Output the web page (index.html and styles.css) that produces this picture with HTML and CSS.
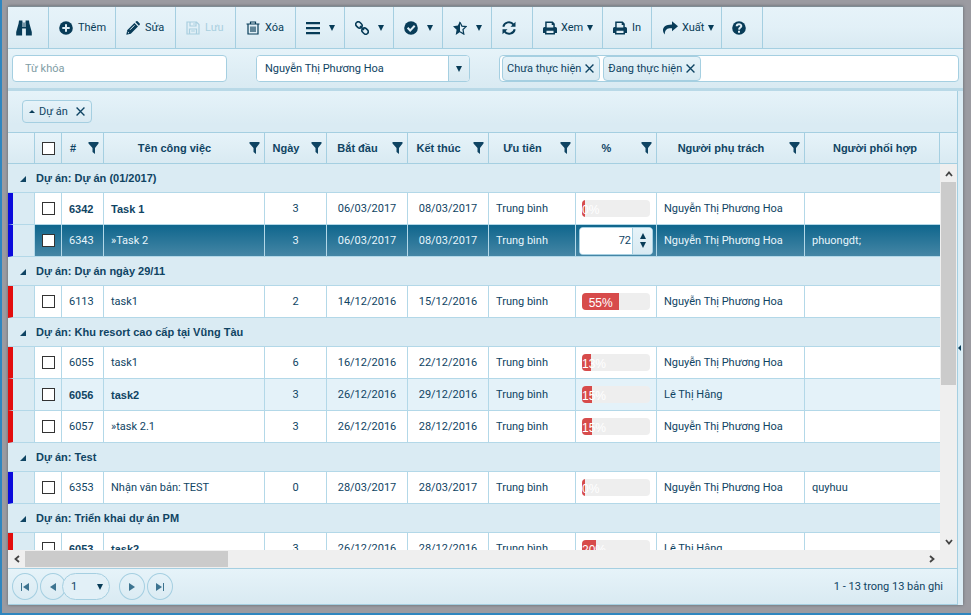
FILE: index.html
```html
<!DOCTYPE html>
<html lang="vi">
<head>
    <meta charset="UTF-8">
    <meta name="viewport" content="width=device-width, initial-scale=1.0">
    <title>Quản lý công việc</title>
    <link rel="stylesheet" href="styles.css">
</head>
<body>
    <div class="window">
        <nav class="toolbar">
            <button class="small" aria-label="Tìm kiếm"><svg class="icon big" viewBox="0 0 16 16"><path d="M3 0.5h3.4v2.2h3.200V0.500H13l0.400 3 2.400 8.500v3.500H9.900V8.500H6.100v7H0.200V12L2.600 3.500z"/><path class="cut" d="M7 3v4M9 3v4"/></svg></button>
            <button class="add"><svg class="icon" viewBox="0 0 14 14"><circle cx="7" cy="7" r="6.800"/><path class="cut thick" d="M7 3.300v7.400M3.300 7h7.400"/></svg>Thêm</button>
            <button class="text"><svg class="icon" viewBox="0 0 14 14"><path d="M1.200 9.200 8.400 2l3.600 3.600-7.200 7.200L0.300 13.700zM9.300 1.100l1-.9q.7-.4 1.300.1l2.100 2.100q.5.700 0 1.300l-.8 1z"/><path class="cut" d="M4 8.800l4.500-4.500M1.800 11l1.200 1.200"/></svg>Sửa</button>
            <button class="text" disabled><svg class="icon line" viewBox="0 0 14 14"><path d="M1 1h9.500L13 3.500V13H1zM4 1v4h6V1M3.500 13V8h7v5M8 2.300v1.500M5.200 10h3.600"/></svg>Lưu</button>
            <button class="text"><svg class="icon line" viewBox="0 0 14 14"><path d="M0.500 3h13M4.500 3V1h5v2M2 3v10h10V3M5 5.500V11M7 5.500V11M9 5.500V11"/></svg>Xóa</button>
            <button class="menu" aria-label="Danh sách"><svg class="icon" viewBox="0 0 14 14"><path d="M0 1h14v2.300H0zM0 6h14v2.300H0zM0 11h14v2.300H0z"/></svg><span class="caret"></span></button>
            <button class="menu" aria-label="Liên kết"><svg class="icon line heavy" viewBox="0 0 14 14"><rect x="0.500" y="1.500" width="6.800" height="5" rx="2.500" transform="rotate(45 4 4)"/><rect x="6.700" y="7.500" width="6.800" height="5" rx="2.500" transform="rotate(45 10 10)"/><path d="M5 5l4 4"/></svg><span class="caret"></span></button>
            <button class="menu" aria-label="Hoàn thành"><svg class="icon" viewBox="0 0 14 14"><circle cx="7" cy="7" r="6.800"/><path class="cut thick" d="M3.600 6.800l2.600 2.700 4.500-4.700"/></svg><span class="caret"></span></button>
            <button class="menu" aria-label="Đánh giá"><svg class="icon" viewBox="0 0 14 14"><path d="M7 0v11l-4.300 3 .9-5.300L0 5.200l4.900-.7z"/><path class="stroke" d="M7 1.200l1.900 3.900 4.100.5-3 2.900.8 4.600L7 10.700"/></svg><span class="caret"></span></button>
            <button class="small" aria-label="Tải lại"><svg class="icon" viewBox="0 0 14 14"><path class="stroke heavy" d="M1.300 5.800A5.700 5.700 0 0 1 11.500 3.600M12.700 8.200A5.700 5.700 0 0 1 2.500 10.400"/><path d="M13.500 0.700v5H8.500zM0.500 13.300v-5h5z"/></svg></button>
            <button class="wide"><svg class="icon" viewBox="0 0 14 14"><path d="M2.200 0.500h7.500l2.100 2.200V6h.7q1.500 0 1.500 1.600V12h-2v1.500H2V12H0V7.600Q0 6 1.500 6h.7z"/><path class="hole" d="M3.700 2h5v2h1.600v2.500H3.700zM3.500 9.800h7V12h-7z"/></svg>Xem<span class="caret"></span></button>
            <button class="menu"><svg class="icon" viewBox="0 0 14 14"><path d="M2.200 0.500h7.500l2.100 2.200V6h.7q1.500 0 1.500 1.600V12h-2v1.500H2V12H0V7.600Q0 6 1.500 6h.7z"/><path class="hole" d="M3.700 2h5v2h1.600v2.500H3.700zM3.500 9.800h7V12h-7z"/></svg>In</button>
            <button class="wide"><svg class="icon big" viewBox="0 0 16 14"><path d="M10 0.300l6 5-6 5V7.200C6 7 3 7.500 2.700 13.500 0 10.500-.8 3.500 10 3.400z"/></svg>Xuất<span class="caret"></span></button>
            <button class="small" aria-label="Trợ giúp"><svg class="icon" viewBox="0 0 14 14"><circle cx="7" cy="7" r="6.800"/><path class="cut thick" d="M4.700 5.200C4.700 2.600 9.400 2.600 9.300 5.100 9.200 6.600 7.200 6.600 7 8.600M7 9.800v1.900"/></svg></button>
        </nav>

        <div class="filters">
            <input type="text" placeholder="Từ khóa" aria-label="Từ khóa">
            <div class="combo">
                <select aria-label="Người phụ trách">
                    <option>Nguyễn Thị Phương Hoa</option>
                    <option>Lê Thị Hằng</option>
                </select>
                <span class="combo-arrow"><span class="caret"></span></span>
            </div>
            <div class="tags">
                <button class="tag">Chưa thực hiện<svg class="cross" viewBox="0 0 8 8"><path d="M0.500 0.500l7 7M7.500 0.500l-7 7"/></svg></button>
                <button class="tag">Đang thực hiện<svg class="cross" viewBox="0 0 8 8"><path d="M0.500 0.500l7 7M7.500 0.500l-7 7"/></svg></button>
                <input type="text" aria-label="Trạng thái">
            </div>
        </div>

        <div class="main">
            <section class="content">
                <div class="grouping">
                    <button class="group-chip"><span class="up"></span>Dự án<svg class="cross" viewBox="0 0 8 8"><path d="M0.500 0.500l7 7M7.500 0.500l-7 7"/></svg></button>
                </div>

                <table class="grid head">
                    <colgroup><col class="c-mark"><col class="c-check"><col class="c-id"><col class="c-name"><col class="c-days"><col class="c-date"><col class="c-date"><col class="c-prio"><col class="c-pct"><col class="c-owner"><col><col class="c-scroll"></colgroup>
                    <thead><tr id="headRow"></tr></thead>
                </table>

                <div class="body-area">
                    <div class="rows">
                        <table class="grid">
                            <colgroup><col class="c-mark"><col class="c-check"><col class="c-id"><col class="c-name"><col class="c-days"><col class="c-date"><col class="c-date"><col class="c-prio"><col class="c-pct"><col class="c-owner"><col></colgroup>
                            <tbody id="taskRows"></tbody>
                        </table>
                    </div>
                    <div class="scroll-y">
                        <svg viewBox="0 0 8 6"><path d="M1 5l3-3.500L7 5"/></svg>
                        <div class="thumb"></div>
                        <svg viewBox="0 0 8 6"><path d="M1 1l3 3.500L7 1"/></svg>
                    </div>
                </div>
                <div class="scroll-x">
                    <svg viewBox="0 0 6 8"><path d="M5 1L1.500 4 5 7"/></svg>
                    <div class="thumb"></div>
                    <svg viewBox="0 0 6 8"><path d="M1 1l3.500 3L1 7"/></svg>
                </div>

                <footer class="pager">
                    <button aria-label="Trang đầu"><svg viewBox="0 0 8 8"><path d="M0 0h1v8H0zM8 0v8L2 4z"/></svg></button>
                    <button aria-label="Trang trước"><svg viewBox="0 0 8 8"><path d="M7 0v8L1 4z"/></svg></button>
                    <div class="page-select">
                        <select aria-label="Trang"><option>1</option></select>
                        <span class="caret"></span>
                    </div>
                    <button aria-label="Trang sau"><svg viewBox="0 0 8 8"><path d="M1 0v8l6-4z"/></svg></button>
                    <button aria-label="Trang cuối"><svg viewBox="0 0 8 8"><path d="M0 0v8l6-4zM7 0h1v8H7z"/></svg></button>
                    <span class="total">1 - 13 trong 13 bản ghi</span>
                </footer>
            </section>
            <aside class="splitter"><span></span></aside>
        </div>
    </div>

    <script>
        const headers = ['#', 'Tên công việc', 'Ngày', 'Bắt đầu', 'Kết thúc', 'Ưu tiên', '%', 'Người phụ trách', 'Người phối hợp'];
        const hoa = 'Nguyễn Thị Phương Hoa';
        const hang = 'Lê Thị Hằng';

        const groups = [
            { title: 'Dự án (01/2017)', color: 'blue', tasks: [
                { id: 6342, name: 'Task 1', days: 3, start: '06/03/2017', end: '08/03/2017', pct: 0, owner: hoa, bold: true },
                { id: 6343, name: '»Task 2', days: 3, start: '06/03/2017', end: '08/03/2017', pct: 72, owner: hoa, with: 'phuongdt;', editing: true }
            ] },
            { title: 'Dự án ngày 29/11', color: 'red', tasks: [
                { id: 6113, name: 'task1', days: 2, start: '14/12/2016', end: '15/12/2016', pct: 55, owner: hoa }
            ] },
            { title: 'Khu resort cao cấp tại Vũng Tàu', color: 'red', tasks: [
                { id: 6055, name: 'task1', days: 6, start: '16/12/2016', end: '22/12/2016', pct: 13, owner: hoa },
                { id: 6056, name: 'task2', days: 3, start: '26/12/2016', end: '29/12/2016', pct: 15, owner: hang, bold: true, alt: true },
                { id: 6057, name: '»task 2.1', days: 3, start: '26/12/2016', end: '28/12/2016', pct: 15, owner: hoa }
            ] },
            { title: 'Test', color: 'blue', tasks: [
                { id: 6353, name: 'Nhận văn bản: TEST', days: 0, start: '28/03/2017', end: '28/03/2017', pct: 0, owner: hoa, with: 'quyhuu' }
            ] },
            { title: 'Triển khai dự án PM', color: 'red', tasks: [
                { id: 6053, name: 'task2', days: 3, start: '26/12/2016', end: '28/12/2016', pct: 20, owner: hang, bold: true }
            ] }
        ];

        const funnel = '<svg class="funnel" viewBox="0 0 10 12"><path d="M0 0h10v1.500L6.500 6v6L4 10V6L0 1.500z"/></svg>';

        // Column titles, all but the last have a filter
        function showHeader() {
            let html = '<th></th><th><input type="checkbox" aria-label="Chọn tất cả"></th>';
            headers.forEach((title, i) => {
                const last = i === headers.length - 1;
                html += `<th><div class="th"><span>${title}</span>${last ? '' : funnel}</div></th>`;
            });
            document.getElementById('headRow').innerHTML = html + '<th></th>';
        }

        function percentCell(task) {
            if (task.editing) {
                return `<div class="spin"><input type="number" value="${task.pct}" aria-label="Phần trăm"><div class="spin-buttons"><button class="inc" aria-label="Tăng"></button><button class="dec" aria-label="Giảm"></button></div></div>`;
            }
            return `<div class="bar"><div class="fill" style="width: ${task.pct}%">${task.pct}%</div></div>`;
        }

        function showTasks() {
            let html = '';
            groups.forEach(group => {
                html += `<tr class="group"><td colspan="11"><span class="fold"></span>Dự án: ${group.title}</td></tr>`;
                group.tasks.forEach(t => {
                    const cls = [t.bold ? 'bold' : '', t.alt ? 'alt' : '', t.editing ? 'selected' : ''].join(' ');
                    html += `<tr class="${cls}"><td class="mark ${group.color}"></td>
                        <td class="center"><input type="checkbox" aria-label="Chọn ${t.id}"></td>
                        <td class="strong">${t.id}</td><td class="strong">${t.name}</td>
                        <td class="center">${t.days}</td><td class="center">${t.start}</td><td class="center">${t.end}</td>
                        <td>Trung bình</td><td class="pct">${percentCell(t)}</td>
                        <td>${t.owner}</td><td>${t.with || ''}</td></tr>`;
                });
            });
            document.getElementById('taskRows').innerHTML = html;
        }

        showHeader();
        showTasks();
    </script>
</body>
</html>
```
FILE: styles.css
```css
* {
    box-sizing: border-box;
}
body {
    margin: 0;
    height: 100vh;
    padding: 6px 8px 8px 6px;
    background: #9b9ba1;
    border-left: 2px solid #2f86bf;
    border-bottom: 2px solid #2f86bf;
    font-family: Roboto, Arial, sans-serif;
    font-size: 11px;
    color: #0f4463;
}
button, input, select {
    font: inherit;
    color: inherit;
    margin: 0;
}
button {
    background: none;
    border: none;
    padding: 0;
}
svg {
    fill: currentColor;
    flex: none;
}
.window {
    height: 100%;
    display: flex;
    flex-direction: column;
    background: #daebf3;
    border-top: 1px solid #7f8d95;
    box-shadow: 0 0 3px #5f686e;
}

/* Toolbar */
.toolbar {
    display: flex;
    flex: none;
    height: 42px;
    background: linear-gradient(#e6f3f9, #e2f0f7 50%, #d9eaf2);
    border-bottom: 1px solid #a5cfe1;
}
.toolbar button {
    display: flex;
    align-items: center;
    gap: 5px;
    padding: 0 0 0 10px;
    border-right: 1px solid #a5cfe1;
    color: #083c58;
}
.toolbar button.small {
    width: 41px;
}
.toolbar button.small:first-child {
    padding-left: 8px;
}
.toolbar button.text {
    width: 60px;
}
.toolbar button.add {
    width: 67px;
}
.toolbar button.menu {
    width: 49px;
}
.toolbar button.menu .caret {
    margin-left: 4px;
}
.toolbar button.wide {
    width: 70px;
    gap: 4px;
}
.toolbar button:disabled {
    color: #a9cfdf;
}
.icon {
    width: 14px;
    height: 14px;
}
.icon.big {
    width: 16px;
    height: 16px;
}
.icon.line, .stroke {
    fill: none;
    stroke: currentColor;
    stroke-width: 1.2;
}
.icon.heavy {
    stroke-width: 1.6;
}
.stroke.heavy {
    stroke-width: 2;
}
.cut {
    fill: none;
    stroke: #e1eff6;
    stroke-width: 1;
}
.cut.thick {
    stroke-width: 2;
}
.hole {
    fill: #e1eff6;
}
.caret {
    border: 3px solid transparent;
    border-top: 6px solid #083c58;
    border-bottom: 0;
}

/* Filters */
.filters {
    display: grid;
    grid-template-columns: 215px 214px 1fr;
    gap: 29px;
    flex: none;
    padding: 6px 4px;
    background: linear-gradient(#e6f3f9, #d9eaf2);
    border-bottom: 3px solid #b9d9e7;
}
.filters > * {
    height: 27px;
    background: #fff;
    border: 1px solid #a5cfe1;
    border-radius: 4px;
    min-width: 0;
}
.filters > input {
    padding: 0 12px;
}
.filters input::placeholder {
    color: #7f9da5;
}
.combo {
    display: flex;
    overflow: hidden;
}
.combo select {
    flex: 1;
    min-width: 0;
    appearance: none;
    border: none;
    background: #fff;
    padding: 0 8px;
}
.combo-arrow {
    width: 21px;
    display: flex;
    align-items: center;
    justify-content: center;
    border-left: 1px solid #a5cfe1;
    background: linear-gradient(#e6f3f9, #d9eaf2);
}
.tags {
    display: flex;
    gap: 3px;
    padding: 0 2px;
}
.tags input {
    flex: 1;
    min-width: 0;
    border: none;
    background: none;
}
.tag, .group-chip {
    display: flex;
    align-items: center;
    flex: none;
    border: 1px solid #a5cfe1;
    border-radius: 4px;
    background: linear-gradient(#e6f3f9, #d9eaf2);
}
.tag {
    gap: 4px;
    padding: 0 5px 0 4px;
}
.cross {
    width: 9px;
    height: 9px;
    fill: none;
    stroke: currentColor;
    stroke-width: 1.2;
}

/* Content */
.main {
    display: flex;
    flex: 1;
    min-height: 0;
}
.content {
    flex: 1;
    min-width: 0;
    display: flex;
    flex-direction: column;
    border-right: 1px solid #a5cfe1;
}
.splitter {
    width: 5px;
    display: flex;
    align-items: center;
    background: #dcedf5;
}
.splitter span {
    border: 3px solid transparent;
    border-right-color: #083c58;
    border-left: 0;
}
.grouping {
    flex: none;
    height: 41px;
    padding: 9px 14px;
    background: linear-gradient(#e6f3f9, #daebf3 80%);
}
.group-chip {
    height: 23px;
    gap: 8px;
    padding: 0 6px;
}
.up {
    border: 3px solid transparent;
    border-bottom-color: #083c58;
    border-top: 0;
    margin-right: -4px;
}

/* Grid */
.grid {
    width: 100%;
    flex: none;
    table-layout: fixed;
    border-collapse: separate;
    border-spacing: 0;
}
.c-mark, .c-check {
    width: 27px;
}
.c-id {
    width: 42px;
}
.c-name {
    width: 161px;
}
.c-days {
    width: 62px;
}
.c-date, .c-pct {
    width: 81px;
}
.c-prio {
    width: 87px;
}
.c-owner {
    width: 148px;
}
.c-scroll {
    width: 17px;
}
th, .group td, .bold .strong {
    font-family: "Liberation Sans", Arial, sans-serif;
    font-weight: bold;
}
th {
    height: 32px;
    padding: 0;
    border: solid #a5cfe1;
    border-width: 1px 1px 1px 0;
    background: linear-gradient(#e6f3f9, #d9eaf2);
}
th:last-child {
    border-right: 0;
}
.th {
    display: flex;
    align-items: center;
    gap: 4px;
    padding-right: 4px;
}
.th span {
    flex: 1;
}
.th span:last-child {
    padding-left: 10px;
}
.funnel {
    width: 11px;
    height: 12px;
}
input[type="checkbox"] {
    appearance: none;
    display: block;
    width: 13px;
    height: 13px;
    margin: 0 auto;
    background: #fff;
    border: 1px solid #333;
}
.body-area {
    display: flex;
    flex: 1;
    min-height: 0;
}
.rows {
    flex: 1;
    min-width: 0;
    overflow: hidden;
}
td {
    height: 32px;
    padding: 0 7px;
    white-space: nowrap;
    background: #fff;
    border: solid #b3d8e8;
    border-width: 0 1px 1px 0;
}
td:last-child {
    border-right: 0;
}
td.center {
    text-align: center;
    padding: 0;
}
.group td {
    height: 29px;
    padding: 0 12px;
    background: #daebf3;
}
.fold {
    display: inline-block;
    border-left: 6px solid transparent;
    border-bottom: 6px solid #0f4463;
    margin-right: 10px;
}
.mark {
    background: #daebf3;
    border-left: 5px solid;
}
.mark.blue {
    border-left-color: #0a0adc;
}
.mark.red {
    border-left-color: #e30d0d;
}
.alt td:not(.mark) {
    background: #e4f2f9;
}
.selected td:not(.mark) {
    background: linear-gradient(#0f668d, #4586a5);
    color: #e8f5fb;
}
td.pct {
    padding: 0 6px;
}
.bar {
    height: 17px;
    border-radius: 4px;
    background: #eee;
    overflow: hidden;
}
.fill {
    height: 17px;
    min-width: 3px;
    background: #d74b4b;
    color: #fff;
    font-family: "Liberation Sans", Arial, sans-serif;
    font-size: 12px;
    line-height: 20px;
    text-align: center;
}
td.pct:has(.spin) {
    padding: 0 3px;
}
.spin {
    display: flex;
    height: 28px;
    background: #fff;
    border: 1px solid #a5cfe1;
    border-radius: 4px;
    overflow: hidden;
    color: #0f4463;
}
.spin input {
    flex: 1;
    min-width: 0;
    padding: 0 1px;
    border: none;
    text-align: right;
    appearance: textfield;
}
.spin input::-webkit-inner-spin-button {
    appearance: none;
    margin: 0;
}
.spin-buttons {
    width: 20px;
    display: flex;
    flex-direction: column;
    align-items: center;
    justify-content: center;
    gap: 3px;
    border-left: 1px solid #a5cfe1;
    background: linear-gradient(#e6f3f9, #d9eaf2);
}
.spin-buttons button {
    border: 3px solid transparent;
}
.spin-buttons .inc {
    border-bottom: 6px solid #083c58;
    border-top: 0;
}
.spin-buttons .dec {
    border-top: 6px solid #083c58;
    border-bottom: 0;
}

/* Scrollbars */
.scroll-y, .scroll-x {
    display: flex;
    align-items: center;
    background: #efefef;
    color: #444;
}
.scroll-y {
    flex-direction: column;
    width: 17px;
    padding: 6px 1px 4px;
}
.scroll-x {
    flex: none;
    height: 18px;
    padding: 1px 21px 1px 5px;
}
.scroll-y svg, .scroll-x svg {
    width: 8px;
    height: 8px;
    fill: none;
    stroke: currentColor;
    stroke-width: 1.8;
}
.scroll-y .thumb {
    width: 100%;
    height: 54%;
    margin: 4px 0 auto;
    background: #cbcbcb;
}
.scroll-x .thumb {
    width: 22%;
    height: 100%;
    margin: 0 auto 0 4px;
    background: #cbcbcb;
}

/* Pager */
.pager {
    flex: none;
    display: flex;
    align-items: center;
    gap: 2px;
    height: 37px;
    padding: 0 14px 0 4px;
    border-top: 1px solid #a5cfe1;
    border-bottom: 1px solid #a5cfe1;
    background: linear-gradient(#e6f3f9, #d9eaf2);
}
.pager button {
    display: flex;
    align-items: center;
    justify-content: center;
    width: 26px;
    height: 27px;
    border: 1px solid #a5cfe1;
    border-radius: 50%;
}
.pager svg {
    width: 8px;
    height: 8px;
    fill: #3d7490;
}
.page-select {
    display: flex;
    align-items: center;
    width: 48px;
    height: 27px;
    margin: 0 7px 0 -6px;
    padding-right: 6px;
    border: 1px solid #a5cfe1;
    border-radius: 14px;
    background: #e2f0f7;
}
.page-select select {
    flex: 1;
    min-width: 0;
    appearance: none;
    border: none;
    background: none;
    padding: 0 8px;
}
.total {
    margin-left: auto;
}
```
